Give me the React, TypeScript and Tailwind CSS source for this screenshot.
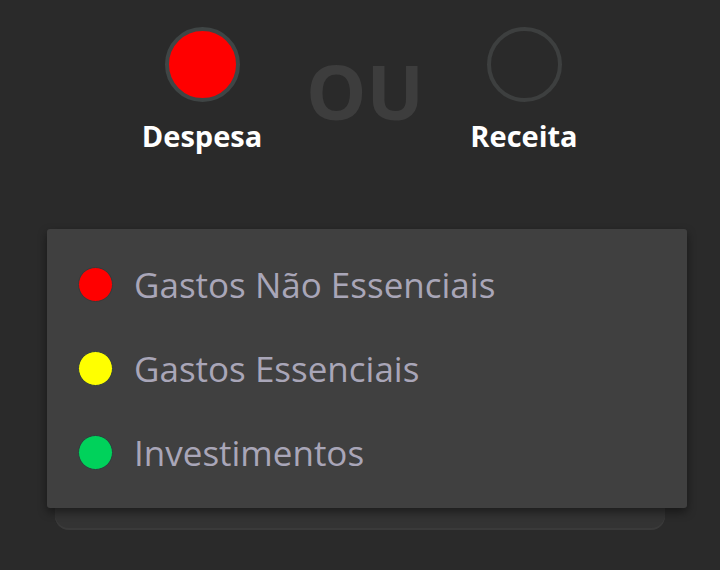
const categories = [
  { label: "Gastos Não Essenciais", color: "bg-[#ff0000]" },
  { label: "Gastos Essenciais", color: "bg-[#ffff00]" },
  { label: "Investimentos", color: "bg-[#00d25b]" },
];

function TypeOption({ label, active }: { label: string; active?: boolean }) {
  return (
    <div className="flex w-[140px] flex-col items-center">
      <div
        className={
          "h-[75px] w-[75px] rounded-full border-4 " +
          (active ? "border-[#3f4545] bg-[#ff0000]" : "border-[#3d3f3f] bg-transparent")
        }
      />
      <span className="mt-[15px] text-[29px] font-bold leading-[38px] text-white">
        {label}
      </span>
    </div>
  );
}

export default function App() {
  return (
    <div
      className="h-[570px] w-[720px] overflow-hidden bg-[#2a2a2a]"
      style={{ fontFamily: '"Open Sans", "Noto Sans", sans-serif' }}
    >
      <div className="flex h-[240px] items-start pl-[132px] pt-[27px]">
        <TypeOption label="Despesa" active />
        <div className="flex w-[182px] justify-center pl-[4px] pt-[26px]">
          <span className="text-[76px] font-bold leading-[76px] text-[#3d3d3d]">
            OU
          </span>
        </div>
        <TypeOption label="Receita" />
      </div>

      <div className="relative ml-[55px] h-[290px] w-[610px] rounded-b-[14px] bg-[#333333] shadow-[inset_0_-2px_0_#3a3a3a]">
        <div className="absolute left-[-8px] top-[-11px] w-[640px] rounded-[3px] bg-[#404040] pb-[14px] pt-[13px] shadow-[0_4px_10px_rgba(0,0,0,0.45)]">
          {categories.map((c) => (
            <div key={c.label} className="flex h-[84px] items-center pl-[31px]">
              <span
                className={
                  "h-[35px] w-[35px] rounded-full border border-[#2f3d3d] " +
                  c.color
                }
              />
              <span className="ml-[21px] text-[35px] leading-none text-[#a9a6b8]">
                {c.label}
              </span>
            </div>
          ))}
        </div>
      </div>
    </div>
  );
}
